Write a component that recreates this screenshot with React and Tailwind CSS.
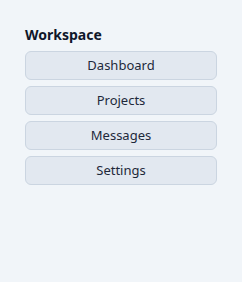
import React from 'react';

const items = ['Dashboard', 'Projects', 'Messages', 'Settings'];

export default function App() {
  return (
    <div
      className="w-[242px] h-[282px] bg-[#f1f5f9] pl-[25px] pt-[25px]"
      style={{ fontFamily: '"Noto Sans", sans-serif' }}
    >
      <div className="w-[192px]">
        <h2 className="text-sm font-bold leading-5 text-[#0f172a] mb-[6px]">Workspace</h2>
        <div className="flex flex-col gap-[6px]">
          {items.map(item => (
            <button
              key={item}
              className="h-[29px] w-full rounded-md border border-[#cbd5e1] bg-[#e2e8f0] text-[13px] text-[#1e293b]"
            >
              {item}
            </button>
          ))}
        </div>
      </div>
    </div>
  );
}
